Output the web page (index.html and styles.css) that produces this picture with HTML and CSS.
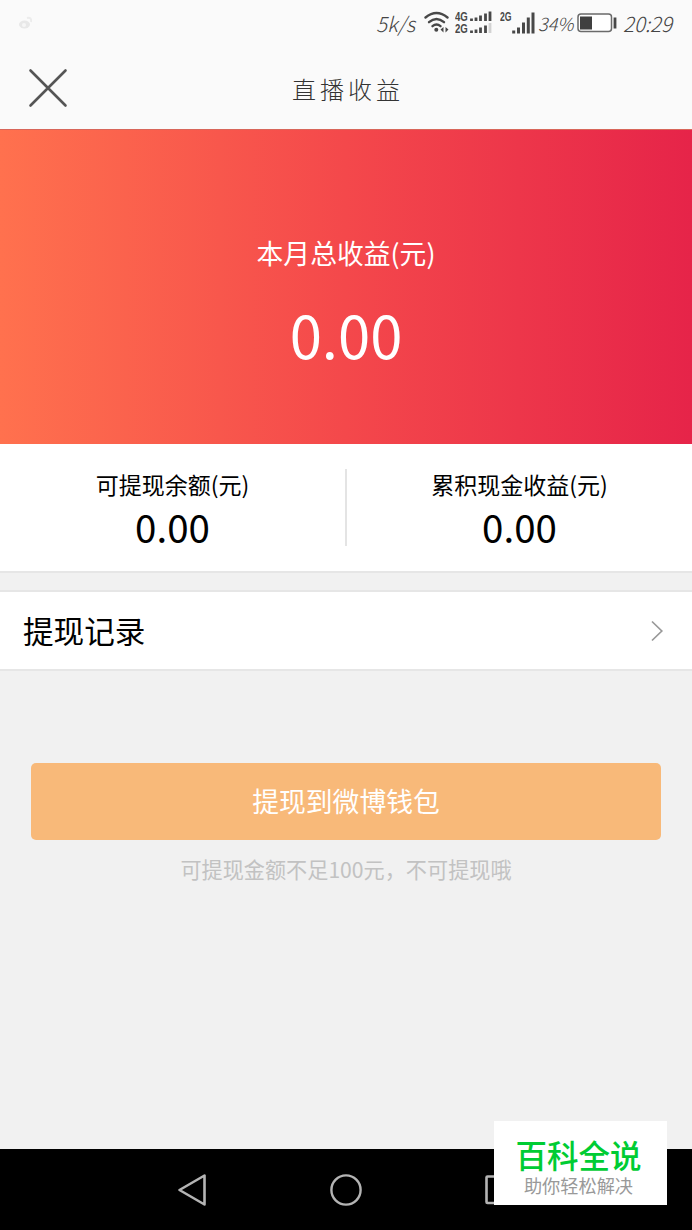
FILE: index.html
```html
<!DOCTYPE html>
<html lang="zh-CN">
<head>
  <meta charset="UTF-8" />
  <title>直播收益</title>
  <link rel="stylesheet" href="styles.css">
</head>
<body>
  <div class="status-bar">
    <svg class="weibo" width="16" height="16" viewBox="0 0 16 16">
      <ellipse cx="6.5" cy="9.5" rx="5.5" ry="4" fill="#e8e8e8" />
      <circle cx="6" cy="10" r="2" fill="#f6f6f6" />
      <path d="M9 3q5-1 4 4" fill="none" stroke="#ececec" stroke-width="2" />
    </svg>
    <span class="speed">5k/s</span>
    <svg class="wifi" width="26" height="24" viewBox="0 0 26 24">
      <g fill="none" stroke="#484848" stroke-width="2.4" stroke-linecap="round">
        <path d="M1.5 6.5Q12.5-2.5 23.5 6.5" />
        <path d="M5 11.2Q12.5 4.6 20 11.2" />
        <path d="M8.5 15.2Q12.5 11.8 16.5 15.2" />
      </g>
      <circle cx="12.3" cy="18.7" r="2" fill="#484848" />
      <path d="M19.5 16v5.500l-3-3zM21.500 16v5.500l3-3z" fill="#484848" />
    </svg>
    <div class="dual">
      <div class="net"><span>4G</span><span>2G</span></div>
      <svg width="24" height="24" viewBox="14 0 24 24">
        <path d="M16.5 10V7.5M21 10V6.500M25.5 10V4.500M30.5 10V2.500M35 10V.5M16.5 22V19.500M21 22V18.500M25.5 22V16.500M30.5 22V14.500" stroke="#484848" stroke-width="2.8" />
        <path d="M35 22V12" stroke="#d2d2d2" stroke-width="2.8" />
      </svg>
    </div>
    <div class="single">
      <div class="net"><span>2G</span></div>
      <svg width="24" height="24" viewBox="11.5 0 24 24">
        <path d="M13.2 22.500V19.500M18 22.500V16.500M23 22.500V11.500M27.8 22.500V6.500M32.5 22.500V1.500" stroke="#484848" stroke-width="3" />
      </svg>
    </div>
    <span class="percent">34%</span>
    <svg class="battery" width="40" height="20" viewBox="0 0 40 20">
      <rect x="1" y="1" width="33.5" height="17.5" rx="3" fill="#fff" stroke="#6a6a6a" stroke-width="1.5" />
      <rect x="3" y="3.5" width="12" height="13" fill="#404040" />
      <path d="M38 4.500v11" stroke="#484848" stroke-width="2.8" />
    </svg>
    <span class="clock">20:29</span>
  </div>

  <div class="title-bar">
    <svg class="close" width="40" height="40" viewBox="0 0 40 40">
      <path d="M2.5 2.500l35 35M37.5 2.500l-35 35" stroke="#555" stroke-width="2.6" stroke-linecap="round" />
    </svg>
    <h1>直播收益</h1>
  </div>

  <div class="hero">
    <div class="hero-label">本月总收益(元)</div>
    <div class="hero-value">0.00</div>
  </div>

  <div class="stats">
    <div class="stat">
      <div class="stat-label">可提现余额(元)</div>
      <div class="stat-value">0.00</div>
    </div>
    <div class="divider"></div>
    <div class="stat">
      <div class="stat-label">累积现金收益(元)</div>
      <div class="stat-value">0.00</div>
    </div>
  </div>

  <div class="record">
    <span>提现记录</span>
    <svg width="14" height="22" viewBox="0 0 14 22">
      <path d="M2 1.500l9.800 9.500L2 20.500" fill="none" stroke="#999" stroke-width="1.7" />
    </svg>
  </div>

  <button class="withdraw">提现到微博钱包</button>
  <p class="tip">可提现金额不足100元，不可提现哦</p>

  <div class="nav-bar">
    <svg width="30" height="34" viewBox="0 0 30 34">
      <path d="M27.5 2.500v29L2.5 17z" fill="none" stroke="#b4b4b4" stroke-width="2.6" stroke-linejoin="round" />
    </svg>
    <svg width="34" height="34" viewBox="0 0 34 34">
      <circle cx="17" cy="17" r="14.600" fill="none" stroke="#b4b4b4" stroke-width="2.4" />
    </svg>
    <svg width="30" height="34" viewBox="0 0 30 34">
      <rect x="1.5" y="3.5" width="27" height="26.5" rx="1" fill="none" stroke="#b4b4b4" stroke-width="2.6" />
    </svg>
  </div>

  <div class="badge">
    <div class="badge-name">百科全说</div>
    <div class="badge-sub">助你轻松解决</div>
  </div>
</body>
</html>
```
FILE: styles.css
```css
* {
  box-sizing: border-box;
}
body {
  position: relative;
  display: flex;
  flex-direction: column;
  height: 1230px;
  margin: 0;
  overflow: hidden;
  background: #f1f1f1;
  color: #000;
  font-family: "Noto Sans CJK SC", sans-serif;
}
svg {
  display: block;
  flex: none;
}
.status-bar {
  display: flex;
  align-items: center;
  height: 46px;
  padding-left: 18px;
  background: #fafafa;
  color: #444;
  font-size: 20.5px;
  font-weight: 300;
  font-style: italic;
  white-space: nowrap;
}
.speed {
  width: 48px;
  margin-left: 342px;
}
.dual,
.single {
  display: flex;
  height: 24px;
}
.dual {
  width: 38px;
  margin-left: 5px;
}
.single {
  width: 36px;
  margin-left: 7px;
}
.net {
  display: flex;
  flex: none;
  flex-direction: column;
  width: 14px;
  color: #484848;
  font: bold 12px/12px "Liberation Sans", sans-serif;
}
.net span {
  transform: scaleX(0.8);
  transform-origin: left;
}
.single .net {
  width: 12px;
}
.single .net span {
  transform: scaleX(0.72);
}
.percent {
  width: 38px;
  margin-left: 2px;
  font-size: 18px;
}
.battery {
  margin-left: 1px;
}
.clock {
  margin-left: 6px;
}
.title-bar {
  display: flex;
  align-items: center;
  height: 83px;
  padding: 0 28px;
  background: #fafafa;
}
h1 {
  flex: 1;
  margin: 1px 36px 0 0;
  color: #333;
  font-size: 24px;
  font-weight: 300;
  letter-spacing: 4px;
  text-align: center;
}
.hero {
  height: 315px;
  padding-top: 103px;
  border-top: 1px solid #d8665a;
  background: linear-gradient(to right, #ff714e, #f4484b 50%, #e62449);
  color: #fff;
  text-align: center;
}
.hero-label {
  font-size: 26.8px;
  line-height: 40px;
}
.hero-value {
  margin-top: 21px;
  font-size: 58px;
  line-height: 80px;
}
.stats {
  display: flex;
  align-items: center;
  height: 129px;
  border-bottom: 2px solid #e6e6e6;
  background: #fff;
}
.stat {
  flex: 1;
  height: 79px;
  text-align: center;
}
.divider {
  width: 2px;
  height: 77px;
  background: #e4e4e4;
}
.stat-label {
  font-size: 23px;
  line-height: 32px;
}
.stat-value {
  font-size: 38.5px;
  line-height: 52px;
}
.record {
  display: flex;
  align-items: center;
  justify-content: space-between;
  height: 81px;
  margin-top: 17px;
  padding: 0 28px 0 23px;
  border-top: 2px solid #e6e6e6;
  border-bottom: 2px solid #e6e6e6;
  background: #fff;
  font-size: 30.6px;
}
.record span {
  margin-top: -2px;
}
.withdraw {
  height: 77px;
  margin: 92px 31px 0;
  padding: 0 0 2px;
  border: 0;
  border-radius: 5px;
  background: #f8b979;
  color: #fff;
  font-family: inherit;
  font-size: 26.8px;
}
.tip {
  margin: 13px 0 0;
  color: #c2c2c2;
  font-size: 21.15px;
  line-height: 32px;
  text-align: center;
}
.nav-bar {
  display: flex;
  align-items: center;
  justify-content: center;
  gap: 122px;
  height: 81px;
  margin-top: auto;
  background: #000;
}
.badge {
  position: absolute;
  top: 1121px;
  left: 494px;
  width: 173px;
  height: 84px;
  padding: 11px 4px 0 0;
  background: #fff;
  text-align: center;
}
.badge-name {
  color: #0c3;
  font-size: 31.5px;
  font-weight: 500;
  line-height: 44px;
}
.badge-sub {
  color: #999;
  font-size: 18.2px;
  line-height: 18px;
}
```
